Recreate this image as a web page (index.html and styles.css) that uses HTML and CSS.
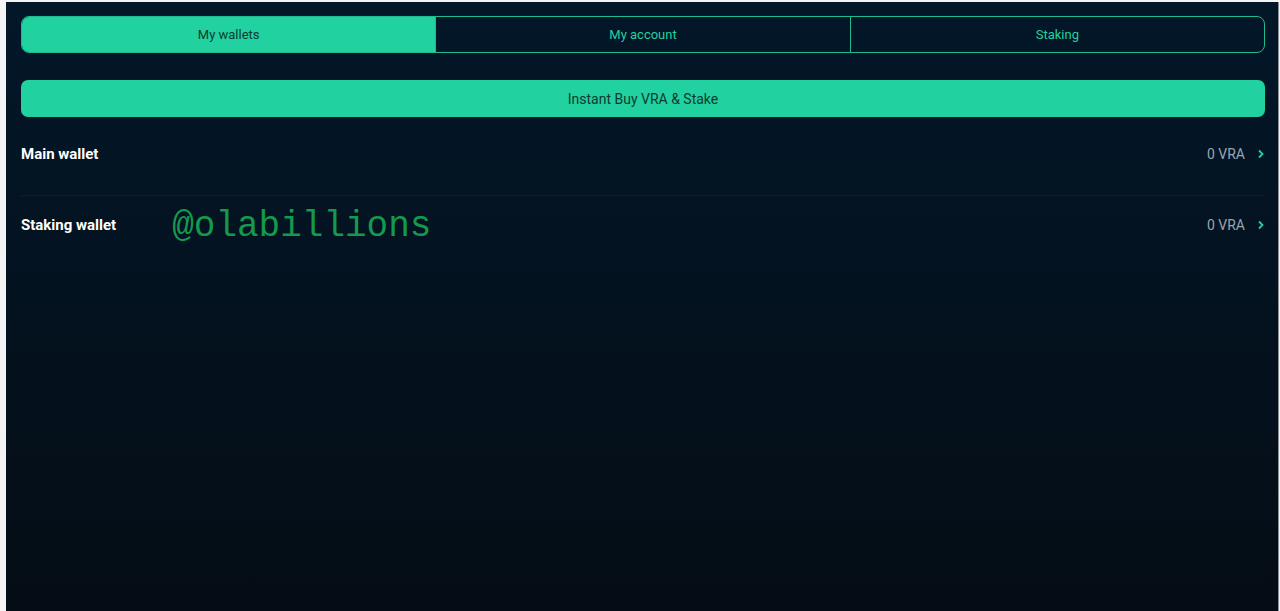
FILE: index.html
```html
<!DOCTYPE html>
<html>
<head>
<meta charset="utf-8">
<link rel="stylesheet" href="styles.css">
</head>
<body>
<div class="frame">
  <div class="app">
    <nav class="tabs">
      <div class="tab active">My wallets</div>
      <div class="tab">My account</div>
      <div class="tab">Staking</div>
    </nav>
    <button class="buy">Instant Buy VRA &amp; Stake</button>
    <div class="wallets">
      <div class="row">
        <span class="name">Main wallet</span>
        <span class="amount">0 VRA <svg class="chev" width="8" height="10" viewBox="0 0 8 10"><path d="M2 1.5 L5.5 5 L2 8.5" fill="none" stroke="#21d19f" stroke-width="1.8"/></svg></span>
      </div>
      <div class="row">
        <span class="name">Staking wallet</span>
        <span class="mark">@olabillions</span>
        <span class="amount">0 VRA <svg class="chev" width="8" height="10" viewBox="0 0 8 10"><path d="M2 1.5 L5.5 5 L2 8.5" fill="none" stroke="#21d19f" stroke-width="1.8"/></svg></span>
      </div>
    </div>
  </div>
</div>
</body>
</html>
```

FILE: styles.css
```css
html, body {
  margin: 0;
  padding: 0;
  height: 100%;
}
body {
  background: #fdfdfd;
  font-family: Roboto, "Liberation Sans", sans-serif;
}
.frame {
  height: 100%;
  box-sizing: border-box;
  padding: 2px 2px 0 6px;
  background: #f4f4f4;
  display: flex;
}
.app {
  flex: 1;
  background: linear-gradient(180deg, #031729 0%, #04111d 60%, #040d15 100%);
  padding: 14px 13px 0 15px;
  box-shadow: 1px 0 0 #8a8f94;
}
.tabs {
  display: flex;
  height: 37px;
  border: 1px solid #1fb98e;
  border-radius: 8px;
  box-sizing: border-box;
  overflow: hidden;
}
.tab {
  flex: 1;
  display: flex;
  align-items: center;
  justify-content: center;
  font-size: 13px;
  color: #21d19f;
  border-left: 1px solid #1fb98e;
}
.tab:first-child {
  border-left: 0;
}
.tab.active {
  background: #21d19f;
  color: #0d3a30;
}
.buy {
  display: block;
  width: 100%;
  margin-top: 27px;
  height: 37px;
  border: 0;
  border-radius: 7px;
  background: #21d19f;
  color: #0d3a30;
  font-family: Roboto, "Liberation Sans", sans-serif;
  font-size: 14px;
}
.wallets {
  display: flex;
  flex-direction: column;
}
.row {
  display: flex;
  align-items: center;
}
.row:first-child {
  height: 79px;
  box-sizing: border-box;
  padding-bottom: 5px;
  border-bottom: 1px solid #0c2030;
}
.row:last-child {
  height: 58px;
}
.name {
  color: #ffffff;
  font-weight: 700;
  font-size: 15px;
  letter-spacing: 0;
}
.amount {
  margin-left: auto;
  color: #9aa5b0;
  font-size: 14px;
  display: flex;
  align-items: center;
  gap: 12px;
}
.chev {
  display: block;
}
.mark {
  margin-left: 56px;
  margin-top: 4px;
  font-family: "Liberation Mono", monospace;
  font-size: 36px;
  color: #139a4c;
  line-height: 1;
}
```
